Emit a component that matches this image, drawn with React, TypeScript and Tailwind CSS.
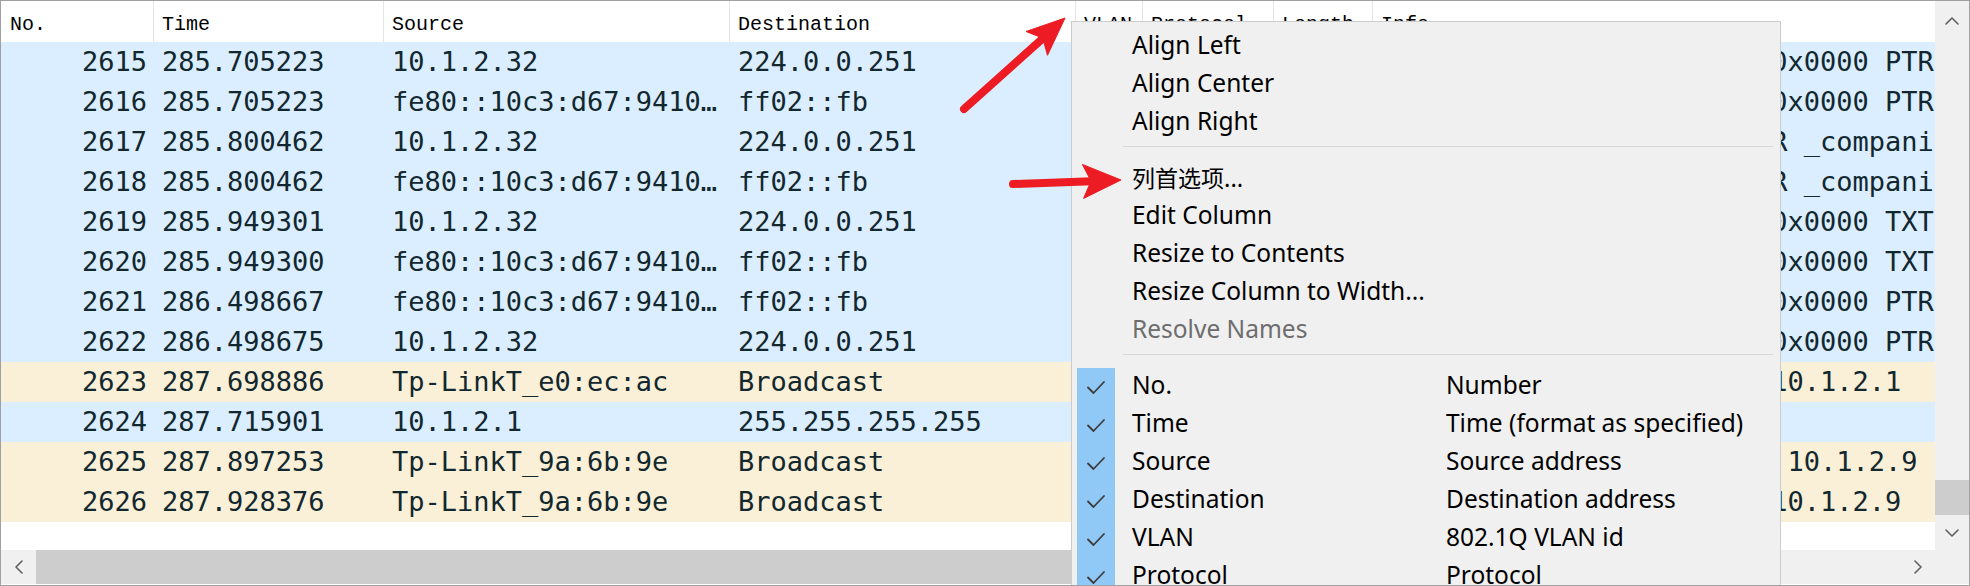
import React from "react";

type Row = {
  no: number;
  t: string;
  src: string;
  dst: string;
  proto: string;
  len: string;
  info: string;
  arp: boolean;
};

const V6 = "fe80::10c3:d67:9410:5c3e";

const rows: Row[] = [
  { no: 2615, t: "285.705223", src: "10.1.2.32", dst: "224.0.0.251", proto: "MDNS", len: "412", info: "Standard query response 0x0000 PTR _companion-link._tcp.local", arp: false },
  { no: 2616, t: "285.705223", src: V6, dst: "ff02::fb", proto: "MDNS", len: "432", info: "Standard query response 0x0000 PTR _companion-link._tcp.local", arp: false },
  { no: 2617, t: "285.800462", src: "10.1.2.32", dst: "224.0.0.251", proto: "MDNS", len: "96", info: "Standard query 0x0000 PTR _companion-link._tcp.local, \"QM\" question", arp: false },
  { no: 2618, t: "285.800462", src: V6, dst: "ff02::fb", proto: "MDNS", len: "116", info: "Standard query 0x0000 PTR _companion-link._tcp.local, \"QM\" question", arp: false },
  { no: 2619, t: "285.949301", src: "10.1.2.32", dst: "224.0.0.251", proto: "MDNS", len: "389", info: "Standard query response 0x0000 TXT, cache flush", arp: false },
  { no: 2620, t: "285.949300", src: V6, dst: "ff02::fb", proto: "MDNS", len: "409", info: "Standard query response 0x0000 TXT, cache flush", arp: false },
  { no: 2621, t: "286.498667", src: V6, dst: "ff02::fb", proto: "MDNS", len: "432", info: "Standard query response 0x0000 PTR _companion-link._tcp.local", arp: false },
  { no: 2622, t: "286.498675", src: "10.1.2.32", dst: "224.0.0.251", proto: "MDNS", len: "412", info: "Standard query response 0x0000 PTR _companion-link._tcp.local", arp: false },
  { no: 2623, t: "287.698886", src: "Tp-LinkT_e0:ec:ac", dst: "Broadcast", proto: "ARP", len: "60", info: "Who has 10.1.2.11? Tell 10.1.2.1", arp: true },
  { no: 2624, t: "287.715901", src: "10.1.2.1", dst: "255.255.255.255", proto: "UDP", len: "82", info: "52000 → 52000 Len=40", arp: false },
  { no: 2625, t: "287.897253", src: "Tp-LinkT_9a:6b:9e", dst: "Broadcast", proto: "ARP", len: "60", info: "Who has 10.1.2.254? Tell 10.1.2.9", arp: true },
  { no: 2626, t: "287.928376", src: "Tp-LinkT_9a:6b:9e", dst: "Broadcast", proto: "ARP", len: "60", info: "Who has 10.1.2.20? Tell 10.1.2.9", arp: true },
];

const headers = ["No.", "Time", "Source", "Destination", "VLAN", "Protocol", "Length", "Info"];

const GRID = "grid grid-cols-[152px_230px_346px_346px_67px_131px_99px_900px]";

function Check() {
  return (
    <svg width="20" height="15" viewBox="0 0 20 15" fill="none">
      <path d="M2 7.5 L7.5 13 L18 2" stroke="#3c3c3c" strokeWidth="1.8" strokeLinecap="round" strokeLinejoin="round" />
    </svg>
  );
}

function Chevron({ dir }: { dir: "up" | "down" | "left" | "right" }) {
  const d =
    dir === "up"
      ? "M1 8 L7 2 L13 8"
      : dir === "down"
      ? "M1 2 L7 8 L13 2"
      : dir === "left"
      ? "M8 1 L2 7 L8 13"
      : "M2 1 L8 7 L2 13";
  const w = dir === "up" || dir === "down" ? 14 : 10;
  const h = dir === "up" || dir === "down" ? 10 : 14;
  return (
    <svg width={w} height={h} viewBox={`0 0 ${w} ${h}`} fill="none">
      <path d={d} stroke="#606060" strokeWidth="1.6" strokeLinecap="round" strokeLinejoin="round" />
    </svg>
  );
}

type MenuEntry =
  | { kind: "sep" }
  | { kind: "item"; label: string; cjk?: boolean; disabled?: boolean; checked?: boolean; desc?: string };

const menu: MenuEntry[] = [
  { kind: "item", label: "Align Left" },
  { kind: "item", label: "Align Center" },
  { kind: "item", label: "Align Right" },
  { kind: "sep" },
  { kind: "item", label: "列首选项...", cjk: true },
  { kind: "item", label: "Edit Column" },
  { kind: "item", label: "Resize to Contents" },
  { kind: "item", label: "Resize Column to Width..." },
  { kind: "item", label: "Resolve Names", disabled: true },
  { kind: "sep" },
  { kind: "item", label: "No.", checked: true, desc: "Number" },
  { kind: "item", label: "Time", checked: true, desc: "Time (format as specified)" },
  { kind: "item", label: "Source", checked: true, desc: "Source address" },
  { kind: "item", label: "Destination", checked: true, desc: "Destination address" },
  { kind: "item", label: "VLAN", checked: true, desc: "802.1Q VLAN id" },
  { kind: "item", label: "Protocol", checked: true, desc: "Protocol" },
  { kind: "item", label: "Length", checked: true, desc: "Frame length on the wire" },
];

function ContextMenu() {
  return (
    <div className="absolute left-[1070px] top-[20px] w-[710px] h-[600px] bg-[#f0f0f0] border border-[#cccccc] pt-[6px] pl-[5px] font-['Noto_Sans','Noto_Sans_CJK_SC',sans-serif] text-[24.5px] text-black">
      {menu.map((m, i) =>
        m.kind === "sep" ? (
          <div key={i} className="h-[18px] pt-[4px] pl-[46px] pr-[7px]">
            <div className="h-px bg-[#d7d7d7]" />
          </div>
        ) : (
          <div key={i} className="flex items-center h-[38px]">
            <div className={`w-[38px] h-[38px] flex items-center justify-center ${m.checked ? "bg-[#90c8f6]" : ""}`}>
              {m.checked ? <Check /> : null}
            </div>
            <div
              className={`ml-[17px] w-[314px] pb-[4px] whitespace-nowrap ${m.disabled ? "text-[#6d6d6d]" : ""} ${
                m.cjk ? "font-['Noto_Sans_CJK_SC',sans-serif] text-[23px]" : ""
              }`}
            >
              {m.label}
            </div>
            {m.desc ? <div className="pb-[4px] whitespace-nowrap">{m.desc}</div> : null}
          </div>
        )
      )}
    </div>
  );
}

function Arrows() {
  return (
    <svg className="absolute left-0 top-0 pointer-events-none" width="1970" height="586" viewBox="0 0 1970 586">
      <g fill="#ed1c24" stroke="#ed1c24">
        <line x1="963" y1="108" x2="1040" y2="39" strokeWidth="8" strokeLinecap="round" />
        <polygon points="1064,17 1046.5,54.3 1041.7,37.1 1025,30.5" strokeWidth="1" strokeLinejoin="round" />
        <line x1="1012" y1="183" x2="1091" y2="180.2" strokeWidth="8" strokeLinecap="round" />
        <polygon points="1120,179 1082.6,197.4 1090,180.1 1081.4,163.4" strokeWidth="1" strokeLinejoin="round" />
      </g>
    </svg>
  );
}

export default function App() {
  return (
    <div className="relative w-[1970px] h-[586px] overflow-hidden bg-white border border-[#a0a0a0] flex flex-col">
      <div className="flex h-[549px]">
        {/* table viewport */}
        <div className="w-[1934px] h-full overflow-hidden bg-white">
          <div className="w-[2300px]">
            <div className={`${GRID} h-[41px] bg-white font-['Liberation_Mono',monospace] text-[20px] text-black`}>
              {headers.map((h, i) => (
                <div
                  key={h}
                  className={`h-full pt-[7px] flex items-center whitespace-nowrap ${i === 0 ? "pl-[9px]" : "pl-[8px] border-l border-[#e5e5e5]"}`}
                >
                  {h}
                </div>
              ))}
            </div>
            {rows.map((r) => (
              <div
                key={r.no}
                className={`${GRID} h-[40px] items-center font-['DejaVu_Sans_Mono',monospace] text-[27px] text-[#12272e] ${
                  r.arp ? "bg-[#faf0d7]" : "bg-[#daeeff]"
                }`}
              >
                <div className="text-right pr-[6px] whitespace-nowrap">{r.no}</div>
                <div className="pl-[9px] whitespace-nowrap overflow-hidden">{r.t}</div>
                <div className="pl-[9px] pr-[8px] whitespace-nowrap overflow-hidden text-ellipsis">{r.src}</div>
                <div className="pl-[9px] pr-[8px] whitespace-nowrap overflow-hidden text-ellipsis">{r.dst}</div>
                <div className="pl-[9px] whitespace-nowrap overflow-hidden"></div>
                <div className="pl-[9px] whitespace-nowrap overflow-hidden">{r.proto}</div>
                <div className="pl-[9px] whitespace-nowrap overflow-hidden">{r.len}</div>
                <div className="pl-[9px] whitespace-nowrap overflow-hidden">{r.info}</div>
              </div>
            ))}
          </div>
        </div>
        {/* vertical scrollbar */}
        <div className="w-[34px] h-full bg-[#f0f0f0] flex flex-col">
          <div className="h-[40px] flex items-center justify-center">
            <Chevron dir="up" />
          </div>
          <div className="flex-1 flex flex-col justify-end">
            <div className="h-[35px] bg-[#cdcdcd]" />
          </div>
          <div className="h-[35px] flex items-center justify-center">
            <Chevron dir="down" />
          </div>
        </div>
      </div>
      {/* horizontal scrollbar */}
      <div className="flex h-[34px]">
        <div className="w-[1934px] h-full bg-[#f0f0f0] flex">
          <div className="w-[35px] h-full flex items-center justify-center">
            <Chevron dir="left" />
          </div>
          <div className="w-[1465px] h-full bg-[#cdcdcd]" />
          <div className="flex-1" />
          <div className="w-[34px] h-full flex items-center justify-center">
            <Chevron dir="right" />
          </div>
        </div>
        <div className="w-[34px] h-full bg-[#f0f0f0]" />
      </div>
      <ContextMenu />
      <Arrows />
    </div>
  );
}
